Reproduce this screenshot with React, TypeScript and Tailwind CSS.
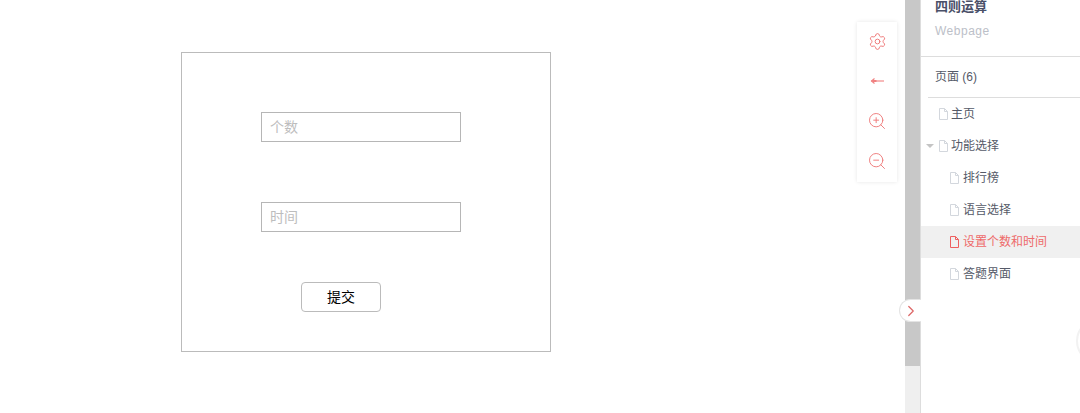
import React from 'react';
import { ChevronRight, Settings, ZoomIn, ZoomOut } from 'lucide-react';

const FONT = 'font-["Liberation_Sans","Noto_Sans_CJK_SC",sans-serif]';

const FileIcon = ({ active }: { active?: boolean }) => (
  <svg width="9" height="12" viewBox="0 0 9 12" fill="none" className="shrink-0" stroke={active ? '#ee5f5f' : '#d3d7dd'}>
    <path d="M.5.5h5l3 3v8h-8z" />
    <path d="M5.5.5v3h3" />
  </svg>
);

const BackIcon = () => (
  <svg width="16" height="16" viewBox="0 0 16 16" fill="none" stroke="#f08080" strokeWidth="1.1">
    <path d="M2 8h13" />
    <path d="M5.5 5.5 2.5 8l3 2.5" />
    <path d="M3.5 8h4" strokeWidth="2" />
  </svg>
);

const pages = [
  { name: '主页', indent: 'pl-[18px] gap-[3px]' },
  { name: '功能选择', indent: 'pl-[18px] gap-[3px]', caret: true },
  { name: '排行榜', indent: 'pl-[29px] gap-[4px]' },
  { name: '语言选择', indent: 'pl-[29px] gap-[4px]' },
  { name: '设置个数和时间', indent: 'pl-[29px] gap-[4px]', active: true },
  { name: '答题界面', indent: 'pl-[29px] gap-[4px]' },
];

const App: React.FC = () => {
  return (
    <div className={`${FONT} relative flex h-[413px] w-[1080px] overflow-hidden bg-white`}>
      {/* canvas */}
      <div className="relative w-[905px] shrink-0">
        <div className="ml-[181px] mt-[52px] h-[300px] w-[370px] border border-[#bbbbbb] pl-[79px] pt-[59px]">
          <div className="flex h-[30px] w-[200px] items-center border border-[#b6b6b6] pl-[8px] text-[14px] text-[#bdbdbd]">个数</div>
          <div className="mt-[60px] flex h-[30px] w-[200px] items-center border border-[#b6b6b6] pl-[8px] text-[14px] text-[#bdbdbd]">时间</div>
          <button className="ml-[40px] mt-[50px] block h-[30px] w-[80px] rounded-[4px] border border-[#bbbbbb] bg-white text-[14px] text-black">提交</button>
        </div>

        {/* toolbar */}
        <div className="absolute left-[857px] top-[22px] h-[160px] w-[40px] bg-white shadow-[0_0_4px_rgba(0,0,0,0.1)]">
          <div className="-mt-[1px] flex flex-col">
            <div className="flex h-[40px] items-center justify-center">
              <Settings size={19} color="#ee7676" strokeWidth={1.2} />
            </div>
            <div className="flex h-[40px] items-center justify-center">
              <BackIcon />
            </div>
            <div className="flex h-[40px] items-center justify-center">
              <ZoomIn size={20} color="#ee7676" strokeWidth={1.1} />
            </div>
            <div className="flex h-[40px] items-center justify-center">
              <ZoomOut size={20} color="#ee7676" strokeWidth={1.1} />
            </div>
          </div>
        </div>
      </div>

      {/* scrollbar */}
      <div className="flex w-[15px] shrink-0 flex-col bg-[#efefef]">
        <div className="h-[366px] bg-[#c8c8c8]" />
      </div>

      {/* page list */}
      <div className="relative w-[160px] shrink-0 border-l border-[#dddddd] text-[12px] text-[#555a68]">
        <div className="-mt-[3px] h-[60px] border-b border-[#dddddd] pl-[14px]">
          <div className="h-[20px] text-[13px] font-bold leading-[20px] text-[#4a5068]">四则运算</div>
          <div className="mt-[5px] text-[12px] leading-[18px] tracking-[0.5px] text-[#bcc0c8]">Webpage</div>
        </div>
        <div className="ml-[7px] flex h-[41px] items-center border-b border-[#dddddd] pl-[7px]">页面 (6)</div>
        <div>
          {pages.map((page) => (
            <div
              key={page.name}
              className={`relative flex h-[32px] items-center ${page.indent} ${page.active ? 'bg-[#f0f0f0] text-[#ee6a6a]' : ''}`}
            >
              {page.caret && (
                <span className="absolute left-[5px] top-[14px] h-0 w-0 border-x-[4px] border-t-[4px] border-x-transparent border-t-[#c4c4c4]" />
              )}
              <FileIcon active={page.active} />
              <span>{page.name}</span>
            </div>
          ))}
        </div>
        {/* floating button peeking in from the right edge */}
        <div className="absolute left-[155px] top-[318px] h-[46px] w-[46px] rounded-full border-2 border-[#f2f2f2] bg-white" />
      </div>

      {/* collapse toggle */}
      <div className="absolute left-[899px] top-[299px] flex h-[23px] w-[22px] items-center justify-center rounded-l-full border border-r-0 border-[#e4e4e4] bg-white">
        <ChevronRight size={18} color="#dd6666" strokeWidth={1.6} />
      </div>
    </div>
  );
};

export default App;
